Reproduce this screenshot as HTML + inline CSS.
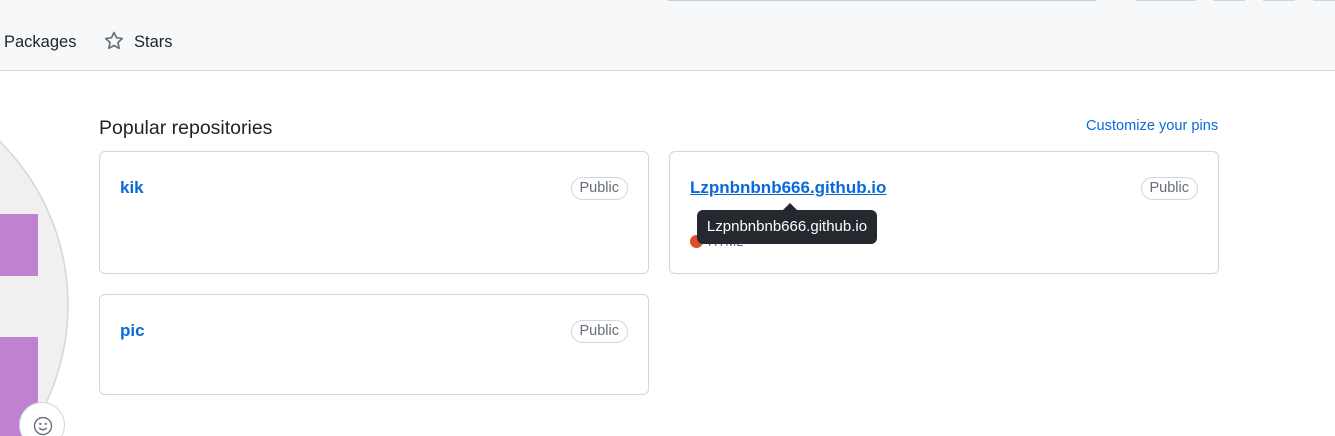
<!DOCTYPE html>
<html style="overflow:hidden;width:1335px;height:436px"><head><meta charset="utf-8"><style>
body{margin:0;width:1335px;height:436px;overflow:hidden;background:#fff;font-family:"Liberation Sans",sans-serif;position:relative;color:#1f2328}
.hdr{position:absolute;left:0;top:0;width:1335px;height:70px;background:#f6f8fa;border-bottom:1px solid #d0d7de}
.abs{position:absolute}
.card{position:absolute;border:1px solid #d0d7de;border-radius:6px;box-sizing:border-box;background:#fff}
.name{position:absolute;left:20px;top:26px;font-size:17px;font-weight:bold;color:#0969da}
.pub{position:absolute;right:20px;top:25px;font-size:14.5px;color:#656d76;border:1px solid #d0d7de;border-radius:12px;padding:1px 8px;line-height:19px}
</style></head><body>
<div class="hdr">
<div class="abs" style="left:668px;top:0;width:428px;height:1px;background:#c5ced8"></div>
<div class="abs" style="left:1136px;top:0;width:60px;height:1px;background:#d0d7de"></div>
<div class="abs" style="left:1213px;top:0;width:32px;height:1px;background:#d0d7de"></div>
<div class="abs" style="left:1263px;top:0;width:32px;height:1px;background:#d0d7de"></div>
<div class="abs" style="left:1313px;top:0;width:22px;height:1px;background:#d0d7de"></div>
<div class="abs" style="left:4px;top:33px;font-size:16.5px">Packages</div>
<svg class="abs" style="left:104px;top:31px" width="20" height="20" viewBox="0 0 16 16"><path d="M8 1.2l2 4.2 4.6.6-3.4 3.2.9 4.6L8 11.6l-4.1 2.2.9-4.6L1.4 6l4.6-.6z" fill="none" stroke="#656d76" stroke-width="1.3" stroke-linejoin="round"/></svg>
<div class="abs" style="left:134px;top:33px;font-size:16.5px">Stars</div>
</div>
<svg class="abs" style="left:0;top:0" width="100" height="436" viewBox="0 0 100 436">
<circle cx="-162" cy="305" r="230" fill="#f0f0f0" stroke="#d0d7de" stroke-width="1.5"/>
<rect x="0" y="214" width="38" height="62" fill="#c082d0"/>
<rect x="0" y="337" width="38" height="99" fill="#c082d0"/>
<circle cx="42" cy="425" r="22.5" fill="#fff" stroke="#d0d7de"/>
<g transform="translate(33 416) scale(1.25)"><circle cx="8" cy="8" r="6.8" fill="none" stroke="#656d76" stroke-width="1.1"/><circle cx="5.8" cy="6.3" r="0.9" fill="#656d76"/><circle cx="10.2" cy="6.3" r="0.9" fill="#656d76"/><path d="M5 9.5q3 3 6 0" fill="none" stroke="#656d76" stroke-width="1.1"/></g>
</svg>
<div class="abs" style="left:99px;top:117px;font-size:19.5px">Popular repositories</div>
<div class="abs" style="left:1086px;top:118px;font-size:14.6px;color:#0969da">Customize your pins</div>
<div class="card" style="left:99px;top:151px;width:550px;height:123px"><div class="name">kik</div><div class="pub">Public</div></div>
<div class="card" style="left:669px;top:151px;width:550px;height:123px"><div class="name" style="text-decoration:underline">Lzpnbnbnb666.github.io</div><div class="pub">Public</div>
<div class="abs" style="left:20px;top:83px;width:13px;height:13px;border-radius:50%;background:#e34c26"></div>
<div class="abs" style="left:38px;top:82px;font-size:13px;color:#656d76">HTML</div></div>
<div class="card" style="left:99px;top:294px;width:550px;height:101px"><div class="name">pic</div><div class="pub">Public</div></div>
<div class="abs" style="left:697px;top:210px;width:180px;height:34px;background:#24292f;border-radius:6px;color:#fff;font-size:15px;line-height:34px;text-align:center">Lzpnbnbnb666.github.io</div>
<div class="abs" style="left:783px;top:203px;width:0;height:0;border-left:7px solid transparent;border-right:7px solid transparent;border-bottom:7px solid #24292f"></div>
</body></html>
